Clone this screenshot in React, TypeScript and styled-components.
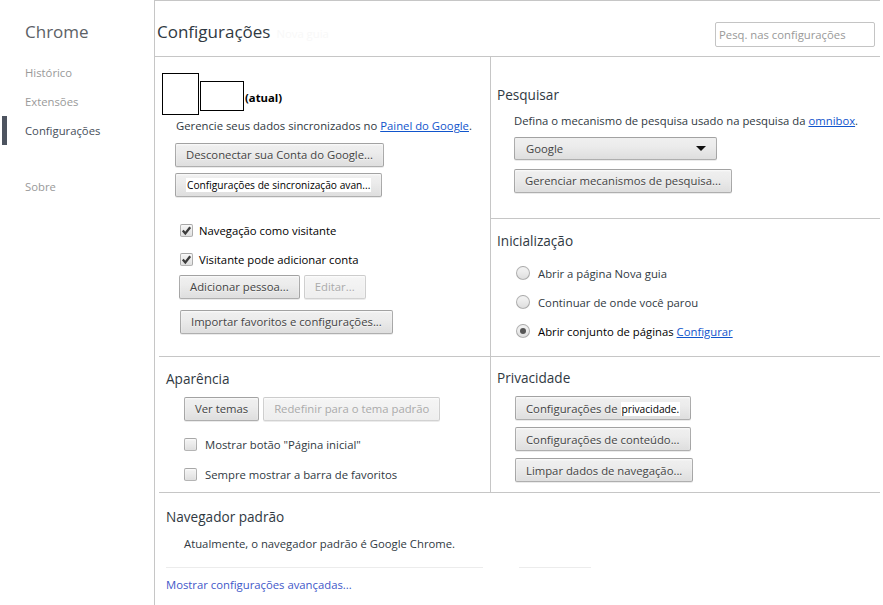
import React from 'react'
import styled, { createGlobalStyle } from 'styled-components'

const LINE = '#c6c6c6'
const TEXT = '#303942'
const LINK = '#1155cc'

const GlobalStyle = createGlobalStyle`
  html, body {
    margin: 0;
    padding: 0;
    background: #fff;
  }

  body {
    font-family: 'Open Sans', 'Noto Sans', sans-serif;
    font-size: 11.3px;
    color: ${TEXT};
  }

  * {
    box-sizing: border-box;
  }
`

const Page = styled.div`
  display: flex;
  width: 883px;
  height: 605px;
  overflow: hidden;
`

const Sidebar = styled.nav`
  width: 155px;
  flex: none;
  border-right: 1px solid ${LINE};
  padding-top: 20px;
`

const Brand = styled.div`
  padding-left: 25px;
  font-size: 17px;
  line-height: 24px;
  color: #5c6166;
`

const NavList = styled.div`
  display: flex;
  flex-direction: column;
  margin-top: 14px;
`

const NavItem = styled.div<{ $active?: boolean; $gap?: number }>`
  height: 29px;
  display: flex;
  align-items: center;
  margin-left: 2px;
  margin-top: ${(p) => p.$gap || 0}px;
  padding-left: 18px;
  border-left: 5px solid ${(p) => (p.$active ? '#4d5460' : 'transparent')};
  color: ${(p) => (p.$active ? '#464e5a' : '#999')};
`

const Main = styled.main`
  width: 725px;
  flex: none;
  display: flex;
  flex-direction: column;
`

const Header = styled.header`
  height: 57px;
  display: flex;
  align-items: flex-start;
  padding-left: 2px;
  border-top: 1px solid ${LINE};
  border-bottom: 1px solid ${LINE};
`

const Title = styled.h1`
  margin: 19px 0 0;
  font-size: 17px;
  font-weight: normal;
  line-height: 24px;
  color: ${TEXT};

  span {
    margin-left: 6px;
    font-size: 11.3px;
    color: #f8f8f8;
  }
`

const Search = styled.input`
  margin: 21px 5px 0 auto;
  width: 160px;
  height: 25px;
  padding: 0 3px;
  border: 1px solid #c4c4c4;
  border-radius: 2px;
  font: inherit;
  color: ${TEXT};
  outline: none;

  &::placeholder {
    color: #999;
  }
`

const Content = styled.div`
  padding-left: 4px;
`

const Grid = styled.div`
  display: grid;
  grid-template-columns: 332px 389px;
  grid-template-rows: 162px 138px 136px;
`

const Section = styled.section<{ $span?: boolean; $divider?: boolean; $pad?: number }>`
  display: flex;
  flex-direction: column;
  align-items: flex-start;
  grid-row: ${(p) => (p.$span ? 'span 2' : 'auto')};
  padding-top: ${(p) => p.$pad ?? 0}px;
  border-bottom: 1px solid ${LINE};
  border-right: ${(p) => (p.$divider ? `1px solid ${LINE}` : 'none')};
`

const Heading = styled.h3<{ $indent?: number }>`
  margin: 0 0 0 ${(p) => p.$indent ?? 7}px;
  font-size: 13.6px;
  font-weight: normal;
  line-height: 20px;
  color: ${TEXT};
`

const Block = styled.div<{ $top: number; $left: number }>`
  display: flex;
  align-items: center;
  gap: 4px;
  margin-top: ${(p) => p.$top}px;
  margin-left: ${(p) => p.$left}px;
  line-height: 16px;
`

const Para = styled.p<{ $top: number; $left: number }>`
  margin: ${(p) => p.$top}px 0 0 ${(p) => p.$left}px;
  line-height: 16px;
`

const Link = styled.a`
  color: ${LINK};
  text-decoration: underline;
  cursor: pointer;
`

const Profile = styled.div`
  display: flex;
  align-items: flex-start;
  margin: 16px 0 0 3px;
`

const Avatar = styled.div<{ $w: number; $h: number; $top?: number }>`
  width: ${(p) => p.$w}px;
  height: ${(p) => p.$h}px;
  margin-top: ${(p) => p.$top ?? 0}px;
  margin-right: 1px;
  border: 1px solid #000;
  background: #fff;
`

const Current = styled.b`
  margin-top: 17px;
  line-height: 16px;
  color: #000;
`

const Button = styled.button<{ $off?: boolean }>`
  height: 24px;
  padding: 0 10px;
  font: inherit;
  color: ${(p) => (p.$off ? '#aaa' : '#444')};
  border: 1px solid ${(p) => (p.$off ? 'rgba(0,0,0,0.14)' : 'rgba(0,0,0,0.27)')};
  border-radius: 2px;
  background: ${(p) =>
    p.$off
      ? 'linear-gradient(#f5f5f5, #eeeeee)'
      : 'linear-gradient(#f0f0f0, #ececec 38%, #dedede)'};
  box-shadow: 0 1px 0 rgba(0, 0, 0, 0.08), inset 0 1px 2px rgba(255, 255, 255, 0.75);
  text-shadow: 0 1px 0 #f4f4f4;
  white-space: nowrap;
`

const Highlight = styled.span`
  padding: 0 1px;
  background: #fff;
  color: #000;
  text-shadow: none;
  font-size: 10.2px;
`

const SelectBox = styled.div`
  width: 203px;
  height: 23px;
  display: flex;
  align-items: center;
  justify-content: space-between;
  padding: 0 10px 0 11px;
  color: #444;
  border: 1px solid rgba(0, 0, 0, 0.27);
  border-radius: 2px;
  background: linear-gradient(#f0f0f0, #ececec 38%, #dedede);
  box-shadow: 0 1px 0 rgba(0, 0, 0, 0.08);
`

const Arrow = styled.span`
  width: 0;
  height: 0;
  border-left: 5px solid transparent;
  border-right: 5px solid transparent;
  border-top: 5px solid #111;
`

const Option = styled.label<{ $top: number; $left: number; $gap: number; $dark?: boolean }>`
  display: flex;
  align-items: center;
  gap: ${(p) => p.$gap}px;
  height: 16px;
  margin-top: ${(p) => p.$top}px;
  margin-left: ${(p) => p.$left}px;
  color: ${(p) => (p.$dark ? '#000' : TEXT)};
`

const Box = styled.span`
  width: 13px;
  height: 13px;
  display: flex;
  align-items: center;
  justify-content: center;
  border: 1px solid rgba(0, 0, 0, 0.25);
  border-radius: 2px;
  background: linear-gradient(#f2f2f2, #ededed 38%, #dedede);
  box-shadow: inset 0 1px 2px rgba(255, 255, 255, 0.75);
`

const Radio = styled.span<{ $on?: boolean }>`
  width: 14px;
  height: 14px;
  display: flex;
  align-items: center;
  justify-content: center;
  border: 1px solid rgba(0, 0, 0, 0.25);
  border-radius: 50%;
  background: linear-gradient(#f2f2f2, #ededed 38%, #dedede);

  &::after {
    content: '';
    display: ${(p) => (p.$on ? 'block' : 'none')};
    width: 6px;
    height: 6px;
    border-radius: 50%;
    background: #555;
  }
`

const Stack = styled.div<{ $top: number; $left: number }>`
  display: flex;
  flex-direction: column;
  align-items: flex-start;
  gap: 7px;
  margin-top: ${(p) => p.$top}px;
  margin-left: ${(p) => p.$left}px;
`

const Bottom = styled.section`
  display: flex;
  flex-direction: column;
  align-items: flex-start;
  padding-top: 14px;
`

const Rules = styled.div`
  display: flex;
  gap: 36px;
  margin: 15px 0 0 7px;
`

const Rule = styled.span<{ $w: number }>`
  width: ${(p) => p.$w}px;
  height: 1px;
  background: #ececec;
`

const MoreLink = styled.a`
  margin: 9px 0 0 7px;
  line-height: 16px;
  color: #3f58c9;
  cursor: pointer;
`

const Check = ({ checked }: { checked?: boolean }) => (
  <Box>
    {checked && (
      <svg width="11" height="11" viewBox="0 0 11 11">
        <path d="M1.8 5.6 L4.3 8.4 L9.2 2.2" fill="none" stroke="#3c3c3c" strokeWidth="2.3" />
      </svg>
    )}
  </Box>
)

export default function App() {
  return (
    <Page>
      <GlobalStyle />
      <Sidebar>
        <Brand>Chrome</Brand>
        <NavList>
          <NavItem>Histórico</NavItem>
          <NavItem>Extensões</NavItem>
          <NavItem $active>Configurações</NavItem>
          <NavItem $gap={27}>Sobre</NavItem>
        </NavList>
      </Sidebar>

      <Main>
        <Header>
          <Title>
            Configurações<span>Nova guia</span>
          </Title>
          <Search placeholder="Pesq. nas configurações" />
        </Header>

        <Content>
          <Grid>
            <Section $span $divider>
              <Profile>
                <Avatar $w={37} $h={42} />
                <Avatar $w={44} $h={30} $top={8} />
                <Current>(atual)</Current>
              </Profile>
              <Para $top={3} $left={17}>
                Gerencie seus dados sincronizados no <Link>Painel do Google</Link>.
              </Para>
              <Block $top={9} $left={16}>
                <Button>Desconectar sua Conta do Google...</Button>
              </Block>
              <Block $top={6} $left={16}>
                <Button>
                  <Highlight>Configurações de sincronização avan...</Highlight>
                </Button>
              </Block>
              <Option $top={25} $left={21} $gap={6} $dark>
                <Check checked />
                Navegação como visitante
              </Option>
              <Option $top={13} $left={21} $gap={6} $dark>
                <Check checked />
                Visitante pode adicionar conta
              </Option>
              <Block $top={8} $left={20}>
                <Button>Adicionar pessoa...</Button>
                <Button $off>Editar...</Button>
              </Block>
              <Block $top={11} $left={21}>
                <Button>Importar favoritos e configurações...</Button>
              </Block>
            </Section>

            <Section $pad={28}>
              <Heading $indent={6}>Pesquisar</Heading>
              <Para $top={8} $left={23}>
                Defina o mecanismo de pesquisa usado na pesquisa da <Link>omnibox</Link>.
              </Para>
              <Block $top={8} $left={23}>
                <SelectBox>
                  Google
                  <Arrow />
                </SelectBox>
              </Block>
              <Block $top={9} $left={23}>
                <Button>Gerenciar mecanismos de pesquisa...</Button>
              </Block>
            </Section>

            <Section $pad={12}>
              <Heading $indent={6}>Inicialização</Heading>
              <Option $top={14} $left={25} $gap={8}>
                <Radio />
                Abrir a página Nova guia
              </Option>
              <Option $top={13} $left={25} $gap={8}>
                <Radio />
                Continuar de onde você parou
              </Option>
              <Option $top={13} $left={25} $gap={8} $dark>
                <Radio $on />
                <span>
                  Abrir conjunto de páginas <Link>Configurar</Link>
                </span>
              </Option>
            </Section>

            <Section $divider $pad={12}>
              <Heading>Aparência</Heading>
              <Block $top={8} $left={25}>
                <Button>Ver temas</Button>
                <Button $off>Redefinir para o tema padrão</Button>
              </Block>
              <Option $top={15} $left={25} $gap={8}>
                <Check />
                Mostrar botão "Página inicial"
              </Option>
              <Option $top={14} $left={25} $gap={8}>
                <Check />
                Sempre mostrar a barra de favoritos
              </Option>
            </Section>

            <Section $pad={11}>
              <Heading $indent={6}>Privacidade</Heading>
              <Stack $top={8} $left={24}>
                <Button>
                  Configurações de <Highlight>privacidade.</Highlight>
                </Button>
                <Button>Configurações de conteúdo...</Button>
                <Button>Limpar dados de navegação...</Button>
              </Stack>
            </Section>
          </Grid>

          <Bottom>
            <Heading>Navegador padrão</Heading>
            <Para $top={9} $left={25}>
              Atualmente, o navegador padrão é Google Chrome.
            </Para>
            <Rules>
              <Rule $w={317} />
              <Rule $w={72} />
            </Rules>
            <MoreLink>Mostrar configurações avançadas...</MoreLink>
          </Bottom>
        </Content>
      </Main>
    </Page>
  )
}
